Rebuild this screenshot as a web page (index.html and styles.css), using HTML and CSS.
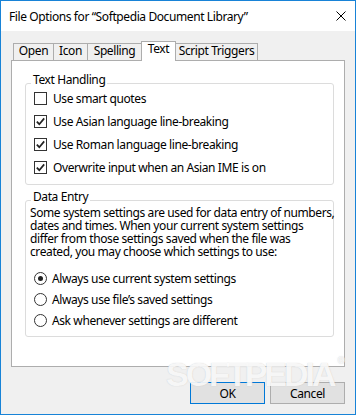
FILE: index.html
```html
<!DOCTYPE html>
<html lang="en">
<head>
    <meta charset="UTF-8">
    <title>File Options</title>
    <link rel="stylesheet" href="styles.css">
</head>
<body>
    <div class="window">
        <div class="titlebar">
            <span class="title">File Options for “Softpedia Document Library”</span>
            <svg class="close" width="10" height="10" viewBox="0 0 10 10">
                <path d="M0.5 0.5 L9.5 9.5 M9.5 0.5 L0.5 9.5" stroke="#000" stroke-width="1" fill="none"/>
            </svg>
        </div>

        <div class="content">
            <div class="tabs">
                <div class="tab tab-open">Open</div>
                <div class="tab tab-icon">Icon</div>
                <div class="tab tab-spelling">Spelling</div>
                <div class="tab tab-text active">Text</div>
                <div class="tab tab-script">Script Triggers</div>
            </div>

            <div class="panel">
                <div class="group">
                    <div class="group-title">Text Handling</div>
                    <label class="option"><span class="checkbox"></span>Use smart quotes</label>
                    <label class="option"><span class="checkbox checked"><svg width="11" height="11" viewBox="0 0 11 11"><path d="M1.8 5.6 L4.3 8.2 L9.2 2.4" stroke="#222" stroke-width="1.7" fill="none"/></svg></span>Use Asian language line-breaking</label>
                    <label class="option"><span class="checkbox checked"><svg width="11" height="11" viewBox="0 0 11 11"><path d="M1.8 5.6 L4.3 8.2 L9.2 2.4" stroke="#222" stroke-width="1.7" fill="none"/></svg></span>Use Roman language line-breaking</label>
                    <label class="option"><span class="checkbox checked"><svg width="11" height="11" viewBox="0 0 11 11"><path d="M1.8 5.6 L4.3 8.2 L9.2 2.4" stroke="#222" stroke-width="1.7" fill="none"/></svg></span>Overwrite input when an Asian IME is on</label>
                </div>

                <div class="group group-data">
                    <div class="group-title">Data Entry</div>
                    <p class="desc">Some system settings are used for data entry of numbers,<br>dates and times. When your current system settings<br>differ from those settings saved when the file was<br>created, you may choose which settings to use:</p>
                    <div class="radios">
                        <label class="radio-row"><span class="radio checked"><span class="dot"></span></span>Always use current system settings</label>
                        <label class="radio-row"><span class="radio"></span>Always use file’s saved settings</label>
                        <label class="radio-row"><span class="radio"></span>Ask whenever settings are different</label>
                    </div>
                </div>
            </div>

            <div class="buttons">
                <button class="btn btn-default">OK</button>
                <button class="btn">Cancel</button>
            </div>
        </div>

        <div class="watermark">SOFTPEDIA<span class="reg">®</span></div>
    </div>
</body>
</html>
```

FILE: styles.css
```css
body {
    margin: 0;
    font-family: "Noto Sans", sans-serif;
    font-size: 12px;
    letter-spacing: -0.4px;
    color: #000;
}

.window {
    position: relative;
    width: 356px;
    height: 415px;
    box-sizing: border-box;
    border: 1px solid #1883d7;
    background-color: #f0f0f0;
    overflow: hidden;
}

.titlebar {
    height: 30px;
    background-color: #fff;
    display: flex;
    align-items: center;
    justify-content: space-between;
    padding: 0 9px 0 8px;
}

.content {
    padding: 10px 10px 0;
}

/* Tabs */
.tabs {
    display: flex;
    align-items: flex-end;
    height: 19px;
    padding-left: 2px;
}

.tab {
    height: 17px;
    box-sizing: border-box;
    border: 1px solid #adadad;
    border-bottom: none;
    line-height: 13px;
    text-align: center;
    white-space: nowrap;
    background-color: #f0f0f0;
    margin-left: -1px;
}

.tab:first-child {
    margin-left: 0;
}

.tab-open { width: 41px; }
.tab-icon { width: 35px; }
.tab-spelling { width: 55px; }
.tab-text { width: 35px; }
.tab-script { width: 83px; }

.tab.active {
    position: relative;
    z-index: 1;
    height: 20px;
    margin-bottom: -1px;
    background-color: #fff;
}

.panel {
    height: 307px;
    box-sizing: border-box;
    border: 1px solid #adadad;
    background-color: #fff;
    padding: 22px 10px 0 13px;
}

/* Group boxes */
.group {
    border: 1px solid #dcdcdc;
    border-radius: 3px;
    padding: 0 0 5px;
}

.group-title {
    display: table;
    margin: -11px 0 0 5px;
    padding: 0 2px;
    background-color: #fff;
    line-height: 14px;
}

.group-data {
    margin-top: 15px;
}

.option {
    display: flex;
    align-items: center;
    height: 23px;
    padding-left: 8px;
    gap: 6px;
}

.checkbox {
    width: 13px;
    height: 13px;
    box-sizing: border-box;
    border: 1px solid #333;
    background-color: #fff;
    display: flex;
    align-items: center;
    justify-content: center;
}

.desc {
    margin: 2px 0 0;
    padding-left: 4px;
    line-height: 13px;
    white-space: nowrap;
}

.radios {
    margin-top: 10px;
}

.radio-row {
    display: flex;
    align-items: center;
    height: 21px;
    padding-left: 8px;
    gap: 5px;
}

.radio {
    width: 13px;
    height: 13px;
    box-sizing: border-box;
    border: 1px solid #333;
    border-radius: 50%;
    background-color: #fff;
    display: flex;
    align-items: center;
    justify-content: center;
}

.radio .dot {
    width: 5px;
    height: 5px;
    border-radius: 50%;
    background-color: #222;
}

/* Buttons */
.buttons {
    display: flex;
    justify-content: flex-end;
    gap: 5px;
    margin-top: 15px;
}

.btn {
    width: 75px;
    height: 22px;
    padding: 0;
    border: 1px solid #adadad;
    background-color: #e1e1e1;
    font-family: inherit;
    font-size: 12px;
    letter-spacing: inherit;
    color: #000;
}

.btn-default {
    border-color: #0078d7;
}

/* Site watermark over the bottom of the dialog */
.watermark {
    position: absolute;
    left: 165px;
    top: 354px;
    font-family: "Liberation Sans", sans-serif;
    font-weight: bold;
    font-size: 34px;
    letter-spacing: -3px;
    color: rgba(255, 255, 255, 0.85);
    text-shadow: 0 0 1px rgba(170, 170, 170, 0.6);
    pointer-events: none;
}

.watermark .reg {
    font-size: 10px;
    letter-spacing: 0;
    vertical-align: top;
    margin-left: 4px;
}
```
